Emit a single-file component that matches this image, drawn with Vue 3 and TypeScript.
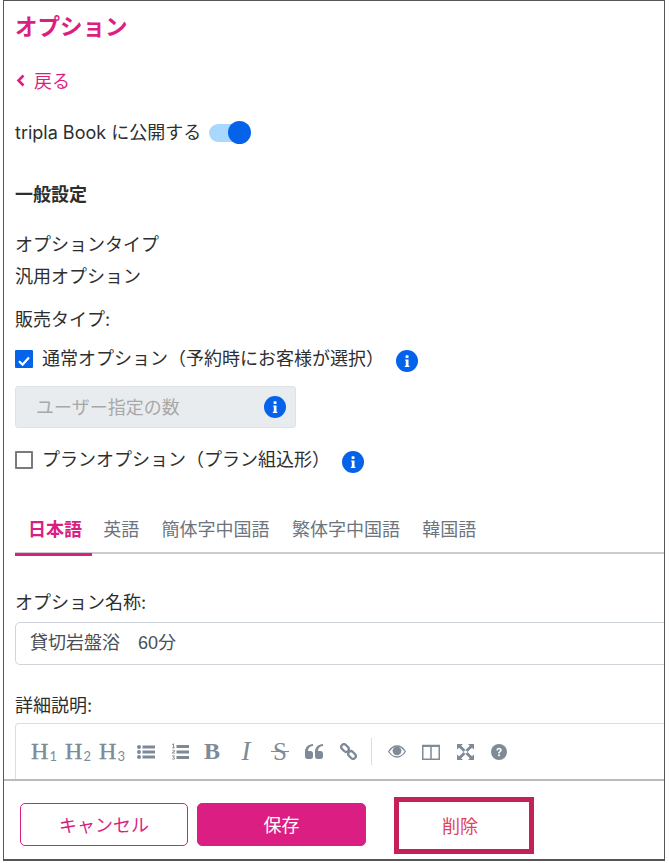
<script setup lang="ts">
const tabs = ['日本語', '英語', '簡体字中国語', '繁体字中国語', '韓国語']
const headings = ['1', '2', '3']
</script>

<template>
  <div class="frame">
    <main class="content">
      <h1 class="title">オプション</h1>

      <a class="back">
        <svg class="back-icon" width="9" height="13" viewBox="0 0 9 13">
          <path d="M7.500 1.500 2.500 6.500 7.500 11.500" fill="none" stroke="currentColor" stroke-width="2.600" />
        </svg>
        戻る
      </a>

      <div class="row publish">
        <span>tripla Book に公開する</span>
        <span class="toggle"><span class="knob" /></span>
      </div>

      <h2 class="section">一般設定</h2>

      <div class="row type-label">オプションタイプ</div>
      <div class="row type-value">汎用オプション</div>
      <div class="row sale-label">販売タイプ:</div>

      <div class="row check-row first">
        <span class="check on">
          <svg width="18" height="18" viewBox="0 0 18 18">
            <path d="M4 9.200 7.600 12.600 14 5.600" fill="none" stroke="#fff" stroke-width="2.200" />
          </svg>
        </span>
        <span class="check-text">通常オプション（予約時にお客様が選択）</span>
        <svg class="info" viewBox="0 0 22 22"><use href="#info-glyph" /></svg>
      </div>

      <div class="disabled-input">
        <span>ユーザー指定の数</span>
        <svg class="info" viewBox="0 0 22 22"><use href="#info-glyph" /></svg>
      </div>

      <div class="row check-row second">
        <span class="check" />
        <span class="check-text">プランオプション（プラン組込形）</span>
        <svg class="info" viewBox="0 0 22 22"><use href="#info-glyph" /></svg>
      </div>

      <nav class="tabs">
        <span v-for="(tab, idx) in tabs" :key="tab" class="tab" :class="{ active: idx === 0 }">{{ tab }}</span>
      </nav>

      <label class="row field-label">オプション名称:</label>
      <div class="text-input">貸切岩盤浴　60分</div>

      <label class="row field-label detail">詳細説明:</label>
      <div class="editor">
        <span v-for="n in headings" :key="n" class="tool heading">H<sub>{{ n }}</sub></span>
        <span class="tool">
          <svg width="18" height="16" viewBox="0 0 18 16" fill="currentColor">
            <circle cx="2" cy="3" r="2" /><circle cx="2" cy="8" r="2" /><circle cx="2" cy="13" r="2" />
            <rect x="5.500" y="1.500" width="12.500" height="3" /><rect x="5.500" y="6.500" width="12.500" height="3" /><rect x="5.500" y="11.500" width="12.500" height="3" />
          </svg>
        </span>
        <span class="tool">
          <svg width="18" height="18" viewBox="0 0 18 18" fill="currentColor">
            <path d="M1 1.200 2.200.4h.8v4H4v.8H1v-.8h1V1.600L1 2Z" />
            <path d="M1 7.200c.6-.7 2.800-.8 2.900.6 0 1-1.100 1.400-1.700 2h1.800v.8H.9v-.7c.7-.8 2-1.300 2-2.100 0-.6-1-.5-1.500 0Z" />
            <path d="M1 12.600h2.800v.6l-1 1c.8.1 1.200.6 1.200 1.200 0 1.400-2.200 1.500-3.100.7l.4-.6c.5.400 1.800.5 1.800-.2 0-.5-.7-.6-1.300-.5v-.6l.9-.9H1Z" />
            <rect x="5.500" y="2" width="12.500" height="3" /><rect x="5.500" y="7.500" width="12.500" height="3" /><rect x="5.500" y="13" width="12.500" height="3" />
          </svg>
        </span>
        <span class="tool letter bold">B</span>
        <span class="tool letter italic">I</span>
        <span class="tool letter strike">S</span>
        <span class="tool">
          <svg width="18" height="15" viewBox="0 0 18 15" fill="currentColor">
            <path d="M8 2V0C3.500.3 0 3 0 8v4.500C0 14 1 15 2.500 15h3C7 15 8 14 8 12.500v-3C8 8 7 7 5.500 7H3c0-2.800 2-5 5-5Z" />
            <path d="M18 2V0c-4.500.3-8 3-8 8v4.500c0 1.500 1 2.500 2.500 2.500h3c1.500 0 2.500-1 2.500-2.500v-3C18 8 17 7 15.500 7H13c0-2.800 2-5 5-5Z" />
          </svg>
        </span>
        <span class="tool">
          <svg width="17" height="17" viewBox="0 0 17 17" fill="none" stroke="currentColor" stroke-width="2.300">
            <rect x="-4.200" y="-2.700" width="8.400" height="5.400" rx="2.700" transform="translate(5 5) rotate(45)" />
            <rect x="-4.200" y="-2.700" width="8.400" height="5.400" rx="2.700" transform="translate(12 12) rotate(45)" />
          </svg>
        </span>
        <span class="divider" />
        <span class="tool">
          <svg width="18" height="13" viewBox="0 0 18 13">
            <path d="M.7 6.500C3 2.800 5.800 1 9 1s6 1.800 8.300 5.500C15 10.200 12.200 12 9 12S3 10.200.7 6.500Z" fill="none" stroke="currentColor" stroke-width="1.300" />
            <circle cx="9" cy="5.800" r="4.400" fill="currentColor" />
          </svg>
        </span>
        <span class="tool">
          <svg width="18" height="16" viewBox="0 0 18 16" fill="none" stroke="currentColor" stroke-width="1.500">
            <rect x=".75" y="1.500" width="16.500" height="13.750" />
            <path d="M9 1.500v13.750" />
            <path d="M0 2h18" stroke-width="2" />
          </svg>
        </span>
        <span class="tool">
          <svg width="17" height="16" viewBox="0 0 17 16" fill="currentColor">
            <path d="M0 0h6L4.200 1.800 6.500 4 8.500 6 6.500 8 4.300 5.800 2 3.800.0 5.500Z" />
            <path d="M17 0h-6l1.800 1.800L10.500 4l-2 2 2 2 2.200-2.200L15 3.800l2 1.700Z" />
            <path d="M0 16h6l-1.800-1.800L6.500 12l2-2-2-2-2.200 2.200L2 12.200.0 10.500Z" />
            <path d="M17 16h-6l1.800-1.800L10.500 12l-2-2 2-2 2.200 2.200 2.300 2 2-1.700Z" />
          </svg>
        </span>
        <span class="tool">
          <svg width="16" height="16" viewBox="0 0 16 16">
            <circle cx="8" cy="8" r="8" fill="currentColor" />
            <path d="M5.300 6.200C5.400 4.700 6.500 3.800 8 3.800s2.800.9 2.800 2.300c0 1.900-2 1.900-2 3.400H7.100c0-2.300 1.900-2.300 1.900-3.300 0-.5-.5-.9-1-.9-.6 0-1 .4-1.100 1.100Z" fill="#fff" />
            <rect x="7.100" y="10.400" width="1.800" height="1.800" fill="#fff" />
          </svg>
        </span>
      </div>
    </main>

    <footer class="footer">
      <button class="btn cancel">キャンセル</button>
      <button class="btn save">保存</button>
      <button class="btn remove">削除</button>
    </footer>

    <svg width="0" height="0" class="defs">
      <symbol id="info-glyph" viewBox="0 0 22 22">
        <circle cx="11" cy="11" r="11" fill="#0563ea" />
        <rect x="9.600" y="5.200" width="2.900" height="2.900" rx=".6" fill="#fff" />
        <path d="M9.200 9.500h3.300v6.200h.9v1.300H8.800v-1.300h1v-4.900h-.6Z" fill="#fff" />
      </symbol>
    </svg>
  </div>
</template>

<style>
html,
body {
  background: #fff;
}
</style>

<style scoped>
.frame {
  box-sizing: border-box;
  width: 662px;
  height: 861px;
  margin-left: 3px;
  border: 1px solid #555;
  border-bottom-width: 2px;
  display: flex;
  flex-direction: column;
  background: #fff;
  color: #2e2e2e;
  font-family: Inter, 'Noto Sans CJK JP', sans-serif;
  font-size: 18px;
  overflow: hidden;
}

.defs {
  position: absolute;
}

.content {
  flex: 1;
  min-height: 0;
  overflow: hidden;
  padding: 9px 0 0 11px;
}

.row {
  display: flex;
  align-items: center;
  height: 28px;
  line-height: 28px;
}

.title {
  margin: 0;
  color: #db1f82;
  font-size: 22.500px;
  font-weight: 700;
  line-height: 34px;
}

.back {
  display: flex;
  align-items: center;
  height: 28px;
  margin-top: 22px;
  color: #db1f82;
}

.back-icon {
  margin: 0 9px 0 1px;
}

.publish {
  margin-top: 25px;
  gap: 8px;
}

.toggle {
  position: relative;
  width: 33px;
  height: 18px;
  border-radius: 9px;
  background: #a9d8ff;
}

.knob {
  position: absolute;
  top: -3px;
  right: -9px;
  width: 23px;
  height: 23px;
  border-radius: 50%;
  background: #0563ea;
}

.section {
  margin: 34px 0 0;
  font-size: 18px;
  font-weight: 700;
  line-height: 28px;
}

.type-label {
  margin-top: 22px;
}

.type-value {
  margin-top: 4px;
}

.sale-label {
  margin-top: 15px;
}

.check-row.first {
  margin-top: 11px;
}

.check-row.second {
  margin-top: 18px;
}

.check {
  box-sizing: border-box;
  display: block;
  flex-shrink: 0;
  width: 18px;
  height: 18px;
  margin-right: 9px;
  border: 2px solid #7a7a7a;
  border-radius: 1px;
}

.check.on {
  border: 0;
  background: #0563ea;
}

.check-text {
  margin-right: 12px;
}

.info {
  flex-shrink: 0;
  width: 22px;
  height: 22px;
  margin-top: 4px;
}

.disabled-input {
  box-sizing: border-box;
  display: flex;
  align-items: center;
  justify-content: space-between;
  width: 281px;
  height: 42px;
  margin-top: 13px;
  padding: 0 9px 0 20px;
  border: 1px solid #dfe2e6;
  border-radius: 3px;
  background: #e9ecef;
  color: #a8a8a8;
}

.disabled-input span {
  margin-top: -2px;
}

.disabled-input .info {
  margin-top: 0;
}

.tabs {
  display: flex;
  height: 46px;
  margin-top: 32px;
  border-bottom: 2px solid #ccc;
}

.tab {
  box-sizing: border-box;
  height: 50px;
  padding: 0 11.200px;
  color: #6c757d;
  line-height: 48px;
}

.tab.active {
  padding: 0 10px 0 13px;
  border-bottom: 3px solid #db1f82;
  color: #db1f82;
  font-weight: 700;
}

.field-label {
  margin-top: 35px;
}

.field-label.detail {
  margin-top: 27px;
}

.text-input {
  box-sizing: border-box;
  width: calc(100% + 20px);
  height: 43px;
  margin-top: 5px;
  padding-left: 14px;
  border: 1px solid #ced4da;
  border-radius: 5px;
  color: #495057;
  font-family: 'Liberation Sans', 'Noto Sans CJK JP', sans-serif;
  line-height: 41px;
}

.editor {
  box-sizing: border-box;
  display: flex;
  align-items: center;
  width: calc(100% + 20px);
  height: 60px;
  margin-top: 3px;
  padding: 0 0 4px 11px;
  border: 1px solid #ddd;
  border-bottom: 0;
  border-radius: 4px 4px 0 0;
  color: #7e8a96;
}

.tool {
  display: flex;
  align-items: center;
  justify-content: center;
  flex-shrink: 0;
  width: 34px;
  height: 34px;
  font-family: 'Liberation Serif', serif;
}

.heading {
  font-size: 24px;
  -webkit-text-stroke: 0.4px #7e8a96;
}

.heading sub {
  margin: 9px 0 0 1px;
  font-size: 13px;
  font-family: Lato, sans-serif;
  line-height: 1;
  vertical-align: baseline;
  -webkit-text-stroke: 0;
}

.letter {
  font-size: 27px;
}

.bold {
  margin-left: -2px;
  font-size: 24px;
  font-weight: 700;
}

.italic {
  font-style: italic;
}

.strike {
  position: relative;
  font-size: 25px;
}

.strike::after {
  content: '';
  position: absolute;
  top: 16px;
  left: 8px;
  width: 18px;
  height: 1.500px;
  background: currentColor;
}

.divider {
  flex-shrink: 0;
  width: 1px;
  height: 27px;
  margin: 0 8px 0 6px;
  background: #ddd;
}

.footer {
  flex-shrink: 0;
  display: flex;
  align-items: flex-start;
  height: 80px;
  padding: 22px 0 0 16px;
  border-top: 2px solid #bbb;
  background: #fff;
  box-sizing: border-box;
}

.btn {
  box-sizing: border-box;
  height: 43px;
  padding: 0 0 2px;
  border-radius: 5px;
  font-family: Inter, 'Noto Sans CJK JP', sans-serif;
  font-size: 18px;
}

.cancel {
  width: 168px;
  border: 1px solid #db1f82;
  background: #fff;
  color: #db1f82;
}

.save {
  width: 169px;
  margin-left: 9px;
  border: 1px solid #db1f82;
  background: #db1f82;
  color: #fff;
}

.remove {
  width: 140px;
  height: 57px;
  margin: -6px 0 0 28px;
  padding: 0 8px 2px 0;
  border: 5px solid #c2215a;
  border-radius: 0;
  background: #fff;
  color: #e0405e;
}
</style>
